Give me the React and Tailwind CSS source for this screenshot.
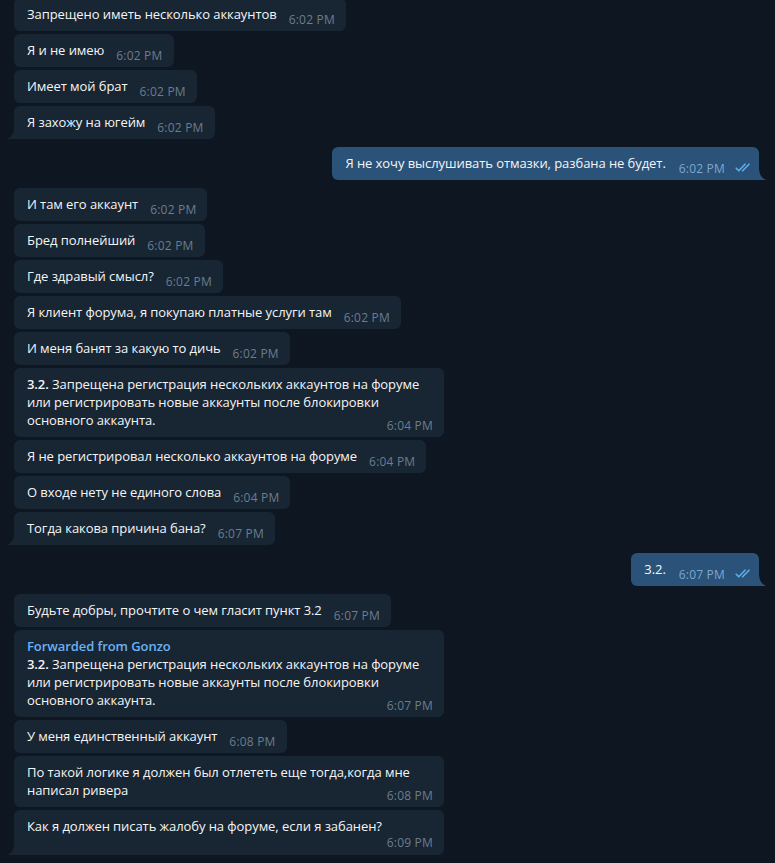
import React from "react";

function Ticks() {
  return (
    <svg width="17" height="9" viewBox="0 0 17 9" className="ml-[10px] translate-y-[4px] shrink-0" fill="none" stroke="#5eaeea" strokeWidth="1.6" strokeLinecap="round" strokeLinejoin="round">
      <path d="M1.2 5.2 L3.8 7.8 L10 1.2" />
      <path d="M7.6 7.8 L14 1.2" />
    </svg>
  );
}

function TailIn() {
  return (
    <svg width="8" height="11" viewBox="0 0 8 11" className="absolute left-[-7px] bottom-0">
      <path d="M8 0 L8 11 L0 11 C4 9.5 6.5 6 7 0 Z" fill="#182533" />
    </svg>
  );
}

function TailOut() {
  return (
    <svg width="8" height="11" viewBox="0 0 8 11" className="absolute right-[-7px] bottom-0">
      <path d="M0 0 L0 11 L8 11 C4 9.5 1.5 6 1 0 Z" fill="#2b5278" />
    </svg>
  );
}

function Time({ t, out }) {
  return (
    <span className={"text-[12px] tracking-[0.2px] leading-none whitespace-nowrap translate-y-[5px] shrink-0 " + (out ? "text-[#7ea7cf]" : "text-[#6b7d8e]")}>
      {t}
    </span>
  );
}

function In({ text, time, tail }) {
  return (
    <div className={"relative w-fit bg-[#182533] rounded-[6px] pl-[13px] pr-[11px] pt-[7px] pb-[8px] " + (tail ? "rounded-bl-none" : "")}>
      <div className="flex items-baseline">
        <span className="leading-[18px] tracking-[-0.07px] whitespace-nowrap">{text}</span>
        <span className="ml-[12px] flex items-baseline">
          <Time t={time} />
        </span>
      </div>
      {tail && <TailIn />}
    </div>
  );
}

function Out({ text, time }) {
  return (
    <div className="relative self-end mr-[16px] w-fit bg-[#2b5278] rounded-[6px] rounded-br-none pl-[13px] pr-[7px] pt-[7px] pb-[8px]">
      <div className="flex items-baseline">
        <span className="leading-[18px] tracking-[-0.07px] whitespace-nowrap">{text}</span>
        <span className="ml-[13px] flex items-baseline">
          <Time t={time} out />
          <Ticks />
        </span>
      </div>
      <TailOut />
    </div>
  );
}

function Multi({ lines, time, header, tail, timeOwn }) {
  const last = lines[lines.length - 1];
  const rest = lines.slice(0, -1);
  return (
    <div className={"relative w-[430px] bg-[#182533] rounded-[6px] pl-[13px] pr-[11px] pt-[7px] tracking-[-0.07px] " + (timeOwn ? "pb-[7px] " : "pb-[8px] ") + (tail ? "rounded-bl-none" : "")}>
      {header && (
        <div className="leading-[18px] font-semibold text-[#6ab2f2] whitespace-nowrap">{header}</div>
      )}
      {rest.map((l, i) => (
        <div key={i} className="leading-[18px] whitespace-nowrap">{l}</div>
      ))}
      {timeOwn ? (
        <>
          <div className="leading-[18px] whitespace-nowrap">{last}</div>
          <div className="flex justify-end h-[13px]">
            <span className="text-[12px] tracking-[0.2px] leading-[13px] text-[#6b7d8e] translate-y-[1px]">{time}</span>
          </div>
        </>
      ) : (
        <div className="flex items-baseline justify-between">
          <span className="leading-[18px] whitespace-nowrap">{last}</span>
          <Time t={time} />
        </div>
      )}
      {tail && <TailIn />}
    </div>
  );
}

const rule = [
  <><span className="font-semibold">3.2.</span> Запрещена регистрация нескольких аккаунтов на форуме</>,
  "или регистрировать новые аккаунты после блокировки",
  "основного аккаунта.",
];

export default function App() {
  return (
    <div className="h-[863px] w-full overflow-hidden bg-[#0e1621] text-[#f5f5f5] text-[13px] font-['Open_Sans','Noto_Sans',sans-serif] flex flex-col justify-end pb-[8px]">
      <div className="flex flex-col gap-[8px]">
        <div className="flex flex-col gap-[3px] pl-[14px]">
          <In text="Запрещено иметь несколько аккаунтов" time="6:02 PM" />
          <In text="Я и не имею" time="6:02 PM" />
          <In text="Имеет мой брат" time="6:02 PM" />
          <In text="Я захожу на югейм" time="6:02 PM" tail />
        </div>
        <div className="flex flex-col">
          <Out text="Я не хочу выслушивать отмазки, разбана не будет." time="6:02 PM" />
        </div>
        <div className="flex flex-col gap-[3px] pl-[14px]">
          <In text="И там его аккаунт" time="6:02 PM" />
          <In text="Бред полнейший" time="6:02 PM" />
          <In text="Где здравый смысл?" time="6:02 PM" />
          <In text="Я клиент форума, я покупаю платные услуги там" time="6:02 PM" />
          <In text="И меня банят за какую то дичь" time="6:02 PM" />
          <Multi lines={rule} time="6:04 PM" />
          <In text="Я не регистрировал несколько аккаунтов на форуме" time="6:04 PM" />
          <In text="О входе нету не единого слова" time="6:04 PM" />
          <In text="Тогда какова причина бана?" time="6:07 PM" tail />
        </div>
        <div className="flex flex-col">
          <Out text="3.2." time="6:07 PM" />
        </div>
        <div className="flex flex-col gap-[3px] pl-[14px]">
          <In text="Будьте добры, прочтите о чем гласит пункт 3.2" time="6:07 PM" />
          <Multi header="Forwarded from Gonzo" lines={rule} time="6:07 PM" />
          <In text="У меня единственный аккаунт" time="6:08 PM" />
          <Multi
            lines={["По такой логике я должен был отлететь еще тогда,когда мне", "написал ривера"]}
            time="6:08 PM"
          />
          <Multi
            lines={["Как я должен писать жалобу на форуме, если я забанен?"]}
            time="6:09 PM"
            tail
            timeOwn
          />
        </div>
      </div>
    </div>
  );
}
